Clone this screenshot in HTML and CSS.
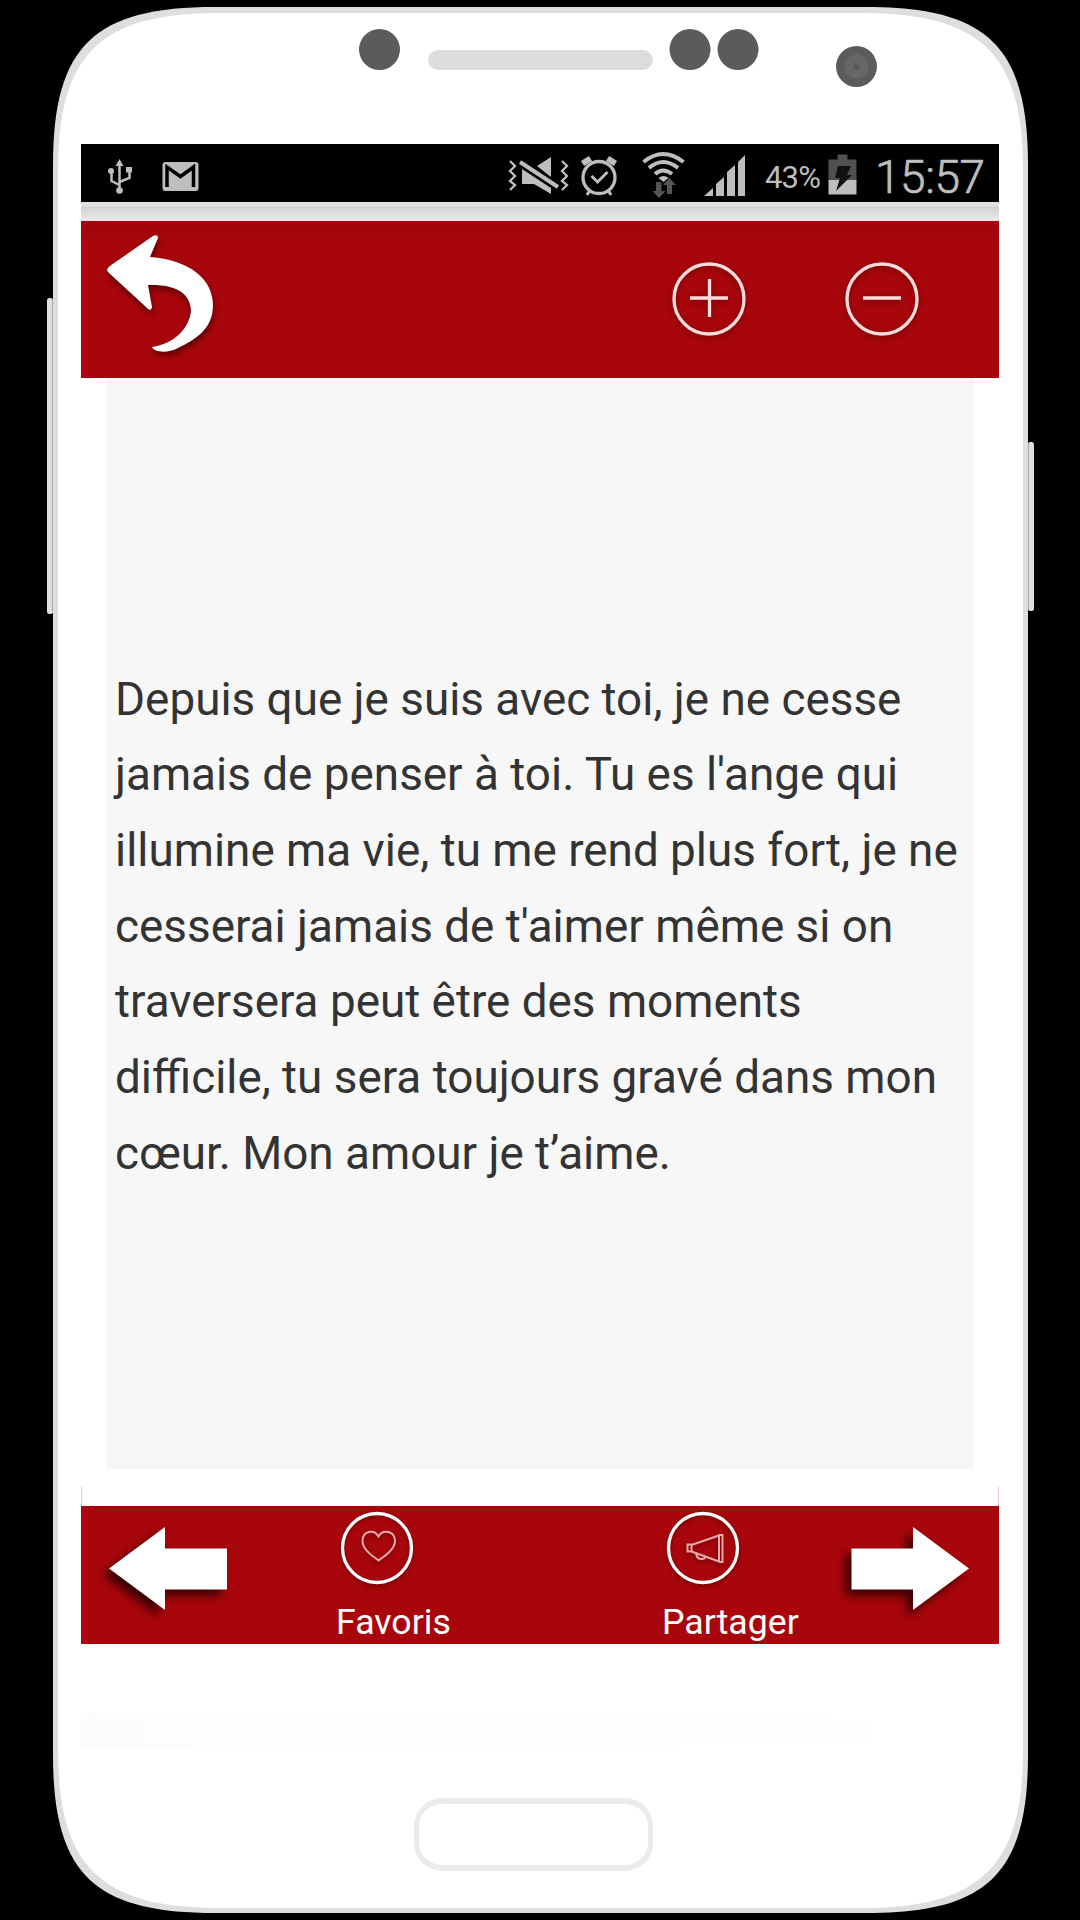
FILE: index.html
```html
<!DOCTYPE html>
<html lang="fr">
<head>
  <meta charset="UTF-8">
  <meta name="viewport" content="width=device-width, initial-scale=1.0">
  <title>Messages d'amour</title>
  <link rel="stylesheet" href="styles.css">
</head>
<body>
  <div class="device">
    <!-- Phone frame -->
    <svg class="frame" viewBox="0 0 1080 1920">
      <rect x="47" y="298" width="6" height="316" rx="2.5" fill="#dedede"/>
      <rect x="1028" y="442" width="6" height="169" rx="2.5" fill="#dedede"/>
      <path fill="#dedede" d="M53 165C53 45 95 7 215 7H866C986 7 1028 45 1028 165V1755C1028 1875 986 1913 866 1913H215C95 1913 53 1875 53 1755Z"/>
      <path fill="#fff" d="M58 170C58 53 101 13 220 13H861C980 13 1023 53 1023 170V1750C1023 1867 980 1908 861 1908H220C101 1908 58 1867 58 1750Z"/>
      <path d="M52.500 300v311M1028.500 444v165" stroke="#a8a8a8"/>
      <rect x="428" y="50" width="225" height="20" rx="10" fill="#dcdcdc"/>
      <g fill="#5b5b5b">
        <circle cx="379.5" cy="49.5" r="20.5"/>
        <circle cx="690" cy="49.5" r="20.5"/>
        <circle cx="738" cy="49.5" r="20.5"/>
        <circle cx="856.5" cy="66.5" r="20.5"/>
      </g>
      <circle cx="856.5" cy="66.5" r="12" fill="#676767"/>
      <circle cx="856.5" cy="66.5" r="3" fill="#575757"/>
    </svg>

    <div class="screen">
      <div class="status-bar">
        <svg class="notifications" width="130" height="58" viewBox="0 0 130 58" fill="#bebebe">
          <path d="M38.500 15l4 7h-8z"/>
          <path d="M38.500 20v29M38.500 41l-8-4v-9M38.500 38l10-4v-9" fill="none" stroke="#bebebe" stroke-width="2.500"/>
          <circle cx="30" cy="27" r="3"/>
          <rect x="45" y="23" width="6" height="5.500"/>
          <circle cx="38.500" cy="46.500" r="3.300"/>
          <rect x="81.500" y="18" width="36" height="29" rx="3"/>
          <path d="M86 43V23L99.500 32.500 112.500 23V43" fill="none" stroke="#000" stroke-width="3.500"/>
        </svg>
        <svg class="indicators" width="245" height="58" viewBox="0 0 245 58" fill="#bebebe">
          <!-- mute / vibrate -->
          <path d="M4 17l5 5-5 5 5 5-5 5 5 4-5 5M56 17l5 5-5 5 5 5-5 5 5 4-5 5" fill="none" stroke="#bebebe" stroke-width="2.300"/>
          <path d="M31 22L45 13V33ZM16 25L45 44V50L28 40H16Z"/>
          <path d="M14 18L52 43" stroke="#bebebe" stroke-width="4" fill="none"/>
          <!-- alarm -->
          <circle cx="93" cy="33.500" r="16" fill="none" stroke="#bebebe" stroke-width="3.300"/>
          <path d="M85.500 32l6 6 10-10M84 46l-3 5M102 46l3 5" fill="none" stroke="#bebebe" stroke-width="3"/>
          <path d="M76.500 19.500l8-5M101.500 14.500l8 5" fill="none" stroke="#bebebe" stroke-width="6"/>
          <!-- wifi -->
          <g fill="none" stroke="#bebebe" stroke-width="4">
            <path d="M137.500 18Q157 2 177.500 18M143 24Q157 12 172 24M149 30Q157 23 166 30"/>
          </g>
          <path d="M152.500 34q5-4 10 0l-5 4z"/>
          <path fill="#555" d="M150 38h5.500v9h4l-6.500 7-6.500-7h3.500zM161 50v-9h-4l6.500-7 6.500 7h-4v9z"/>
          <!-- signal -->
          <path d="M198 52l9-8v8zM210 52V40l8-7v19zM221 52V28l8-7v31zM232 52V18l7-7v41z"/>
        </svg>
        <span class="percent">43%</span>
        <svg class="battery" width="30" height="58" viewBox="0 0 30 58">
          <path fill="#505050" d="M9.500 10.500h10v5h9v22h-28v-22h9z"/>
          <path fill="#bebebe" d="M.5 36h28v14.500h-28z"/>
          <path fill="#111" d="M10 22h13l-4 9h5L8 47l4-13H7z"/>
        </svg>
        <span class="clock">15:57</span>
      </div>

      <div class="strip"></div>

      <header class="toolbar">
        <svg class="back" width="120" height="130" viewBox="0 0 120 130">
          <path fill="#fff" d="M5 35.500Q6 33 10 30.500L51 2Q56 0 56 4L48 23C90 26 111 47 111 71C111 96 92 106 76 114C65 120 52 118 50 113C72 110 88 94 89 76C88 58 72 50 46 51L50 73Q49 79 44 73L7 39Q5 37 5 35.500Z"/>
        </svg>
        <svg class="zoom" width="76" height="76" viewBox="0 0 76 76">
          <circle cx="38" cy="38" r="35"/>
          <path d="M19 37H57M38.500 18V56"/>
        </svg>
        <svg class="zoom" width="76" height="76" viewBox="0 0 76 76">
          <circle cx="38" cy="38" r="35"/>
          <path d="M19 37H57"/>
        </svg>
      </header>

      <main class="message">
        <p>Depuis que je suis avec toi, je ne cesse<br>
        jamais de penser à toi. Tu es l'ange qui<br>
        illumine ma vie, tu me rend plus fort, je ne<br>
        cesserai jamais de t'aimer même si on<br>
        traversera peut être des moments<br>
        difficile, tu sera toujours gravé dans mon<br>
        cœur. Mon amour je t’aime.</p>
      </main>

      <div class="gap"></div>

      <footer class="bottom-bar">
        <svg class="arrow prev" width="120" height="84" viewBox="0 0 120 84">
          <path d="M0 41.500L56 0V21.500H118V62.500H56V83Z"/>
        </svg>
        <div class="action favoris">
          <svg width="76" height="76" viewBox="0 0 76 76">
            <circle cx="38" cy="38" r="34.500"/>
            <path class="heart" d="M39.500 50.500C32 45 23.500 39 23.500 31C23.500 21 35 18.500 39.500 26.500C44 18.500 56 21 56 31C56 39 47 45 39.500 50.500Z"/>
          </svg>
          <span>Favoris</span>
        </div>
        <div class="action partager">
          <svg width="76" height="76" viewBox="0 0 76 76">
            <circle cx="38" cy="38" r="34.500"/>
            <path class="horn" d="M22.500 34.500h4v7h-4zM26.500 35L54 25.500V51.500L26.500 41.500M57.500 25v27h-3.500v-27zM31 43.500q1 5.500 5.500 5.500t4-3.500"/>
          </svg>
          <span>Partager</span>
        </div>
        <svg class="arrow next" width="120" height="84" viewBox="0 0 120 84">
          <path d="M118 41.500L62 0V21.500H0.500V62.500H62V83Z"/>
        </svg>
      </footer>

      <div class="banner"></div>
    </div>

    <div class="home-button"></div>
  </div>
</body>
</html>
```

FILE: styles.css
```css
body {
  margin: 0;
  background-color: #000;
  font-family: Roboto, sans-serif;
}

.device {
  position: relative;
  box-sizing: border-box;
  width: 1080px;
  height: 1920px;
  padding-top: 144px;
  display: flex;
  flex-direction: column;
  align-items: center;
  overflow: hidden;
}

.frame {
  position: absolute;
  top: 0;
  left: 0;
  width: 1080px;
  height: 1920px;
}

/* the frame lies under the screen */
.screen,
.home-button {
  position: relative;
}

.screen {
  width: 918px;
}

.status-bar {
  display: flex;
  height: 58px;
  background-color: #000;
  color: #bebebe;
  white-space: nowrap;
}

.indicators {
  margin-left: 295px;
}

.percent {
  width: 58px;
  margin-left: 14px;
  font-size: 31px;
  line-height: 68px;
  letter-spacing: -0.8px;
}

.battery {
  margin-left: 5px;
}

.clock {
  margin-left: 17px;
  font-size: 46px;
  font-weight: 300;
  line-height: 67px;
  letter-spacing: -0.4px;
  -webkit-text-stroke: 0.7px #bebebe;
}

.strip {
  height: 19px;
  background: linear-gradient(#e4e4e4 0, #dedede 5px, #cecece 5px, #d6d6d6 7px, #e8e8e8 17px, #f5dede 19px);
}

.toolbar {
  display: flex;
  height: 157px;
  background: linear-gradient(#a0050d, #a8060c 22px);
}

.back {
  margin: 13px 0 0 21px;
  filter: drop-shadow(1px 4px 3px rgba(60, 0, 0, 0.7));
}

.zoom {
  margin-top: 40px;
  fill: none;
  stroke: #fbdcda;
  stroke-width: 3.3;
  filter: drop-shadow(0 2px 3px rgba(70, 0, 0, 0.6));
}

.back + .zoom {
  margin-left: 449px;
}

.zoom + .zoom {
  margin-left: 97px;
}

.message {
  display: flex;
  align-items: center;
  box-sizing: border-box;
  width: 867px;
  height: 1091px;
  margin-left: 26px;
  padding: 6px 0 0 8px;
  background-color: #f7f7f7;
}

.message p {
  margin: 0;
  color: #333;
  font-size: 45.85px;
  line-height: 75.7px;
  white-space: nowrap;
}

.gap {
  box-sizing: border-box;
  height: 19px;
  margin-top: 18px;
  border: solid #ecc4c6;
  border-width: 0 1px;
}

.bottom-bar {
  display: flex;
  height: 138px;
  background-color: #a8060c;
}

.arrow {
  margin-top: 21px;
  fill: #fff;
  overflow: visible;
  filter: drop-shadow(-6px 6px 5px rgba(30, 0, 0, 0.8));
}

.prev {
  margin-left: 28px;
}

.action {
  display: flex;
  flex-direction: column;
  gap: 15px;
  color: #fff;
  font-size: 35.7px;
  line-height: 42px;
}

.action svg {
  margin: 4px 0 0 3px;
  fill: none;
  stroke: #fff;
  stroke-width: 3.3;
  filter: drop-shadow(0 2px 2px rgba(70, 0, 0, 0.6));
}

.action .heart,
.action .horn {
  stroke: #eba8a8;
  stroke-width: 2;
}

.favoris {
  width: 120px;
  margin-left: 107px;
}

.partager {
  width: 140px;
  margin-left: 206px;
}

.next {
  margin-left: 49px;
}

.banner {
  height: 34px;
  margin-top: 69px;
  background: linear-gradient(90deg, #fdfcfa, #fdfefc 30%, #fff);
}

.home-button {
  box-sizing: border-box;
  width: 239px;
  height: 73px;
  margin: 51px 13px 0 0;
  border: 6px solid #ebebeb;
  border-width: 6px 5px;
  border-radius: 28px;
}
```
